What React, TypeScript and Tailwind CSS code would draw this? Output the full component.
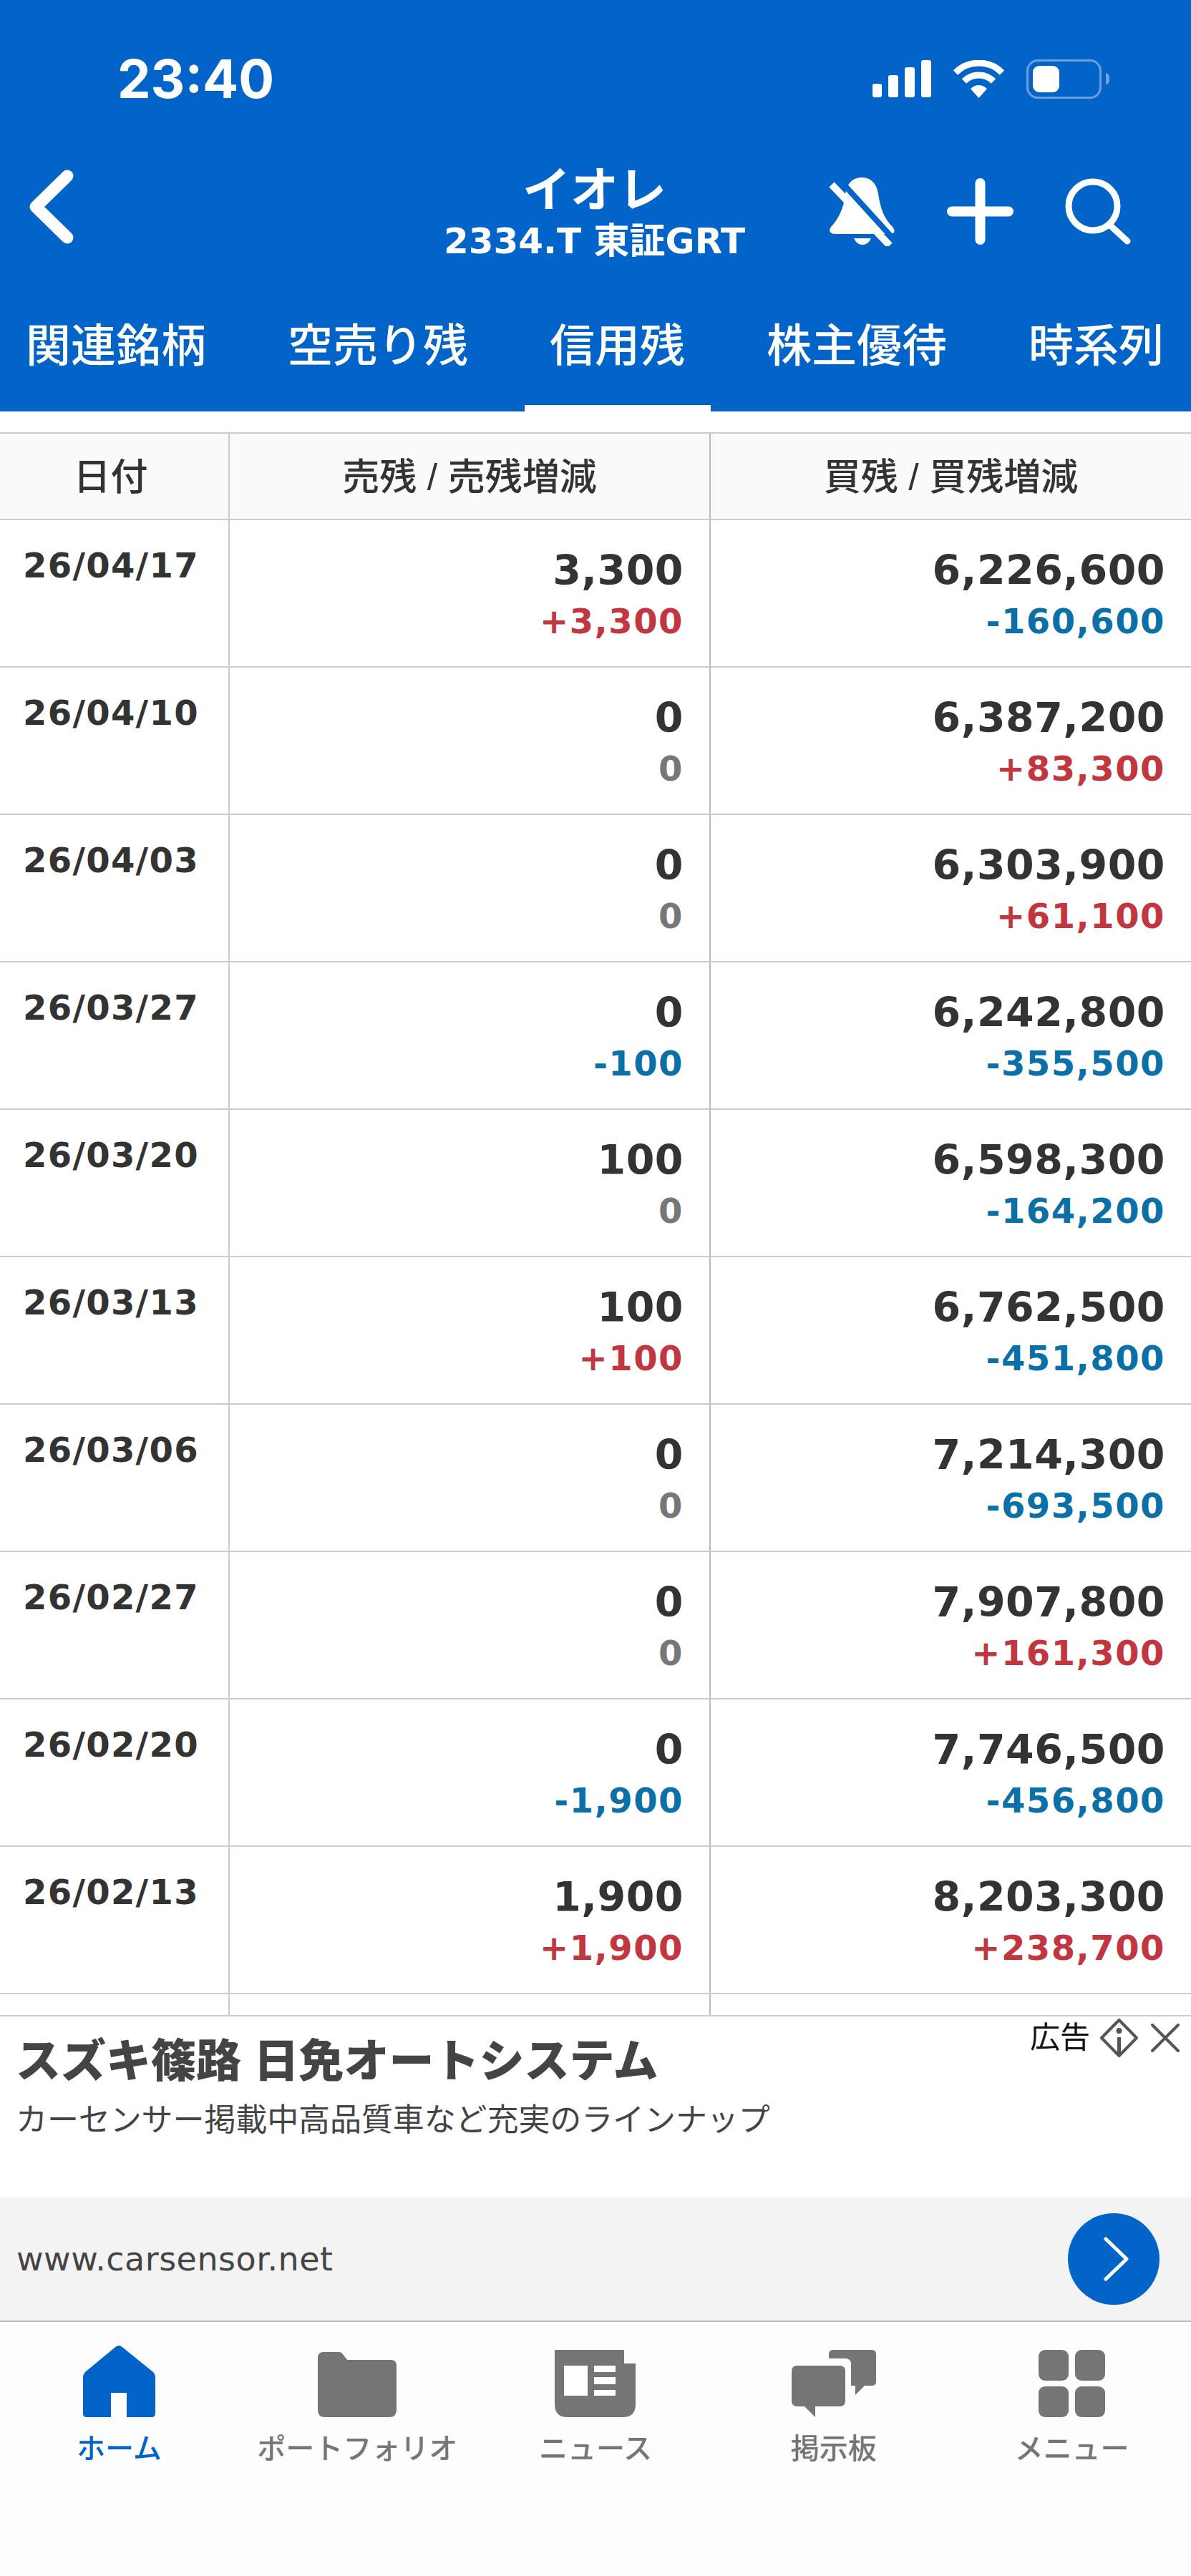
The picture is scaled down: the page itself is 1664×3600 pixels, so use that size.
const tabs = ['関連銘柄', '空売り残', '信用残', '株主優待', '時系列']

type Row = { date: string; sell: string; sellDiff: string; buy: string; buyDiff: string }

const rows: Row[] = [
  { date: '26/04/17', sell: '3,300', sellDiff: '+3,300', buy: '6,226,600', buyDiff: '-160,600' },
  { date: '26/04/10', sell: '0', sellDiff: '0', buy: '6,387,200', buyDiff: '+83,300' },
  { date: '26/04/03', sell: '0', sellDiff: '0', buy: '6,303,900', buyDiff: '+61,100' },
  { date: '26/03/27', sell: '0', sellDiff: '-100', buy: '6,242,800', buyDiff: '-355,500' },
  { date: '26/03/20', sell: '100', sellDiff: '0', buy: '6,598,300', buyDiff: '-164,200' },
  { date: '26/03/13', sell: '100', sellDiff: '+100', buy: '6,762,500', buyDiff: '-451,800' },
  { date: '26/03/06', sell: '0', sellDiff: '0', buy: '7,214,300', buyDiff: '-693,500' },
  { date: '26/02/27', sell: '0', sellDiff: '0', buy: '7,907,800', buyDiff: '+161,300' },
  { date: '26/02/20', sell: '0', sellDiff: '-1,900', buy: '7,746,500', buyDiff: '-456,800' },
  { date: '26/02/13', sell: '1,900', sellDiff: '+1,900', buy: '8,203,300', buyDiff: '+238,700' },
]

function diffColor(v: string) {
  if (v.startsWith('+')) return 'text-[#c1363f]'
  if (v.startsWith('-')) return 'text-[#0b6fa8]'
  return 'text-[#777777]'
}

function StatusIcons() {
  return (
    <div className="flex items-center gap-[31px]">
      <svg width="82" height="52" viewBox="0 0 82 52" fill="white">
        <rect x="0" y="33" width="13" height="19" rx="3" />
        <rect x="22" y="21" width="14" height="31" rx="3" />
        <rect x="45" y="10" width="14" height="42" rx="3" />
        <rect x="68" y="0" width="14" height="52" rx="3" />
      </svg>
      <svg width="71" height="53" viewBox="0 0 71 53" fill="none" stroke="white" strokeWidth="9">
        <path d="M3 17.5A46 46 0 0 1 68 17.5" />
        <path d="M15 29.5A29 29 0 0 1 56 29.5" />
        <path d="M35.5 53L24 40A16 16 0 0 1 47 40Z" fill="white" stroke="none" />
      </svg>
      <div className="flex items-center gap-[6px]">
        <div className="w-[105px] h-[55px] rounded-[16px] border-[3px] border-[#6f9fdc] p-[6px]">
          <div className="w-[37px] h-full rounded-[9px] bg-white" />
        </div>
        <div className="w-[5px] h-[16px] rounded-r-full bg-[#6f9fdc]" />
      </div>
    </div>
  )
}

function MuteBell() {
  return (
    <svg width="94" height="97" viewBox="0 0 94 97" fill="white">
      <path d="M47 1C60 1 68 10 70 24C73 44 78 58 90 70Q96 78 88 80L8 80Q-1 78 4 70C14 60 22 44 24 24C26 10 34 1 47 1Z" />
      <path d="M36 86H60Q56 95 48 95Q40 95 36 86Z" />
      <path d="M13 1L94 90" stroke="#0264c8" strokeWidth="8" />
      <path d="M5 11L86 96" stroke="white" strokeWidth="10" />
    </svg>
  )
}

function HomeIcon() {
  return (
    <svg width="101" height="101" viewBox="0 0 101 101" fill="#0264c8">
      <path d="M44 4Q50 -2 56 4L98 38Q101 41 101 46L101 96Q101 101 96 101L61 101L61 67L39 67L39 101L5 101Q0 101 0 96L0 46Q0 41 3 38Z" />
    </svg>
  )
}

function FolderIcon() {
  return (
    <svg width="110" height="91" viewBox="0 0 110 91" fill="#757575">
      <path d="M8 0L30 0Q33 0 35 3L41 11L102 11Q110 11 110 19L110 81Q110 91 100 91L10 91Q0 91 0 81L0 8Q0 0 8 0Z" />
    </svg>
  )
}

function NewsIcon() {
  return (
    <svg width="113" height="94" viewBox="0 0 113 94">
      <path d="M0 0L97 0L97 19L113 19L113 76Q113 94 95 94L18 94Q0 94 0 76Z" fill="#757575" />
      <rect x="13" y="22" width="33" height="42" fill="white" />
      <rect x="55" y="22" width="30" height="9" fill="white" />
      <rect x="55" y="38" width="30" height="10" fill="white" />
      <rect x="55" y="56" width="30" height="8" fill="white" />
    </svg>
  )
}

function BoardIcon() {
  return (
    <svg width="118" height="94" viewBox="0 0 118 94" fill="#757575">
      <rect x="0" y="22" width="75" height="57" rx="7" />
      <path d="M17 78L33 94L33 78Z" />
      <path d="M58 0L112 0Q118 0 118 6L118 44Q118 50 112 50L102 50L89 63L89 50L83 50L83 20Q83 12 75 12L52 12L52 6Q52 0 58 0Z" />
    </svg>
  )
}

function MenuIcon() {
  return (
    <svg width="93" height="94" viewBox="0 0 93 94" fill="#757575">
      <rect x="0" y="0" width="42" height="43" rx="9" />
      <rect x="51" y="0" width="42" height="43" rx="9" />
      <rect x="0" y="51" width="42" height="43" rx="9" />
      <rect x="51" y="51" width="42" height="43" rx="9" />
    </svg>
  )
}

const navItems = [
  { label: 'ホーム', icon: <HomeIcon />, active: true },
  { label: 'ポートフォリオ', icon: <FolderIcon />, active: false },
  { label: 'ニュース', icon: <NewsIcon />, active: false },
  { label: '掲示板', icon: <BoardIcon />, active: false },
  { label: 'メニュー', icon: <MenuIcon />, active: false },
]

export default function App() {
  return (
    <div className="w-[1664px] h-[3600px] overflow-hidden flex flex-col bg-white [font-family:'Liberation_Sans','Noto_Sans_CJK_JP',sans-serif]">
      <header className="h-[575px] shrink-0 bg-[#0264c8] text-white flex flex-col">
        <div className="h-[220px] flex items-center justify-between pl-[164px] pr-[114px]">
          <div className="text-[74px] leading-none font-bold [font-family:Inter,sans-serif]">23:40</div>
          <StatusIcons />
        </div>

        <div className="h-[150px] grid grid-cols-[1fr_auto_1fr] items-center">
          <div className="pl-[41px]">
            <svg width="62" height="104" viewBox="0 0 62 104" fill="none" stroke="white" strokeWidth="17" strokeLinecap="round" strokeLinejoin="round" className="-mt-[12px]">
              <path d="M53 9L9 52L53 95" />
            </svg>
          </div>
          <div className="flex flex-col items-center pt-[8px] -ml-[3px]">
            <div className="text-[67px] leading-[76px] font-bold">イオレ</div>
            <div className="text-[50px] leading-[66px] font-bold [font-family:'DejaVu_Sans','Noto_Sans_CJK_JP',sans-serif]">2334.T 東証GRT</div>
          </div>
          <div className="flex items-center justify-end pr-[84px] gap-[72px]">
            <MuteBell />
            <svg width="93" height="93" viewBox="0 0 93 93" stroke="white" strokeWidth="14" strokeLinecap="round">
              <path d="M46.5 7V86M7 46.5H86" />
            </svg>
            <svg width="92" height="93" viewBox="0 0 92 93" fill="none" stroke="white" strokeWidth="9" strokeLinecap="round">
              <circle cx="39" cy="39" r="34" />
              <path d="M62 65L87 88" />
            </svg>
          </div>
        </div>

        <nav className="h-[205px] flex pl-[36px] gap-[114px]">
          {tabs.map((tab) => (
            <div key={tab} className="relative flex items-center pt-[22px] text-[63px] leading-none font-medium whitespace-nowrap">
              {tab}
              {tab === '信用残' && <div className="absolute bottom-0 -left-[35px] -right-[36px] h-[9px] bg-white" />}
            </div>
          ))}
        </nav>
      </header>

      <main className="h-[2243px] shrink-0 pt-[29px]">
        <div className="grid grid-cols-[319px_672px_1fr] h-[123px] border-y-2 border-[#cccccc] bg-[#fafafa] text-[52px] font-medium text-[#333333]">
          <div className="flex items-center justify-center pt-[3px] pr-[10px]">日付</div>
          <div className="flex items-center justify-center pt-[3px] border-l-2 border-[#cccccc]">売残 / 売残増減</div>
          <div className="flex items-center justify-center pt-[3px] border-l-2 border-[#bbbbbb]">買残 / 買残増減</div>
        </div>
        {rows.map((r) => (
          <div key={r.date} className="grid grid-cols-[319px_672px_1fr] h-[206px] border-b-2 border-[#cccccc] text-[#333333] font-bold [font-family:'DejaVu_Sans',sans-serif]">
            <div className="pl-[32px] pt-[35px] text-[48px] leading-[56px] tracking-[1.3px]">{r.date}</div>
            <div className="border-l-2 border-[#cccccc] pr-[36px] pt-[35px] text-right">
              <div className="text-[57px] leading-[70px] tracking-[0.5px]">{r.sell}</div>
              <div className={`text-[48px] leading-[72px] tracking-[1.5px] ${diffColor(r.sellDiff)}`}>{r.sellDiff}</div>
            </div>
            <div className="border-l-2 border-[#bbbbbb] pr-[36px] pt-[35px] text-right">
              <div className="text-[57px] leading-[70px] tracking-[0.5px]">{r.buy}</div>
              <div className={`text-[48px] leading-[72px] tracking-[1.5px] ${diffColor(r.buyDiff)}`}>{r.buyDiff}</div>
            </div>
          </div>
        ))}
        <div className="grid grid-cols-[319px_672px_1fr] h-[31px] border-b-2 border-[#cccccc]">
          <div />
          <div className="border-l-2 border-[#cccccc]" />
          <div className="border-l-2 border-[#bbbbbb]" />
        </div>
      </main>

      <section className="relative h-[427px] shrink-0 flex flex-col border-b-2 border-[#bbbbbb] text-[#444444]">
        <div className="h-[253px] pl-[22px] pt-[29px] bg-white">
          <div className="text-[63px] leading-[66px] font-black whitespace-nowrap">スズキ篠路 日免オートシステム</div>
          <div className="mt-[25px] text-[44px] leading-[50px] whitespace-nowrap tracking-[-0.1px]">カーセンサー掲載中高品質車など充実のラインナップ</div>
        </div>
        <div className="flex-1 bg-[#f3f3f3] flex items-center justify-between pl-[23px] pr-[44px]">
          <div className="text-[46px] leading-none tracking-[0.5px] [font-family:'DejaVu_Sans',sans-serif]">www.carsensor.net</div>
          <div className="w-[128px] h-[128px] rounded-full bg-[#0264c8] flex items-center justify-center">
            <svg width="36" height="62" viewBox="0 0 36 62" fill="none" stroke="white" strokeWidth="5" strokeLinecap="round" strokeLinejoin="round" className="ml-[6px]">
              <path d="M4 3L33 31L4 59" />
            </svg>
          </div>
        </div>
        <div className="absolute top-[3px] right-[16px] flex items-center gap-[13px] text-[42px] leading-none text-[#111111]">
          <span>広告</span>
          <svg width="55" height="54" viewBox="0 0 55 54" fill="none" stroke="#555555" strokeWidth="4">
            <path d="M27.5 2L52 27L27.5 52L3 27Z" strokeLinejoin="round" />
            <circle cx="27.5" cy="17" r="4" fill="#555555" stroke="none" />
            <path d="M27.5 26V50" strokeWidth="5" />
          </svg>
          <svg width="40" height="40" viewBox="0 0 40 40" fill="none" stroke="#555555" strokeWidth="4" strokeLinecap="round" className="ml-[4px]">
            <path d="M2 2L38 38M38 2L2 38" />
          </svg>
        </div>
      </section>

      <nav className="flex-1 grid grid-cols-5 bg-[#fdfdfd] pt-[23px]">
        {navItems.map((item) => (
          <div key={item.label} className="flex flex-col items-center">
            <div className="h-[110px] flex items-end">{item.icon}</div>
            <div className={`mt-[22px] text-[40px] leading-[44px] font-medium whitespace-nowrap ${item.active ? 'text-[#0264c8]' : 'text-[#757575]'}`}>
              {item.label}
            </div>
          </div>
        ))}
      </nav>
    </div>
  )
}
